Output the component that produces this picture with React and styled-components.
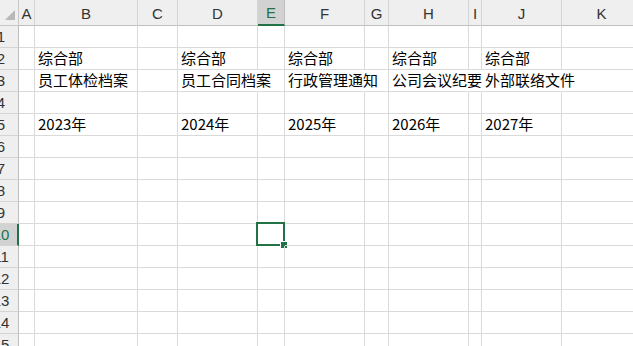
import React from "react";
import styled, { createGlobalStyle, css } from "styled-components";

const GlobalStyle = createGlobalStyle`
  html, body {
    margin: 0;
    padding: 0;
    background: #ffffff;
    overflow: hidden;
  }
`;

const columns = [
  { key: "A", width: 16 },
  { key: "B", width: 103 },
  { key: "C", width: 40 },
  { key: "D", width: 80 },
  { key: "E", width: 27 },
  { key: "F", width: 80 },
  { key: "G", width: 24 },
  { key: "H", width: 80 },
  { key: "I", width: 13 },
  { key: "J", width: 80 },
  { key: "K", width: 80 },
];

const ROW_COUNT = 15;
const ACTIVE_COL = "E";
const ACTIVE_ROW = 10;

// values keyed by row, then column
const data = {
  2: { B: "综合部", D: "综合部", F: "综合部", H: "综合部", J: "综合部" },
  3: {
    B: "员工体检档案",
    D: "员工合同档案",
    F: "行政管理通知",
    H: "公司会议纪要",
    J: "外部联络文件",
  },
  5: { B: "2023年", D: "2024年", F: "2025年", H: "2026年", J: "2027年" },
};

// cells whose right grid line is covered by overflowing text
const openCells = {
  3: ["D", "F", "H", "I", "J"],
};

export default function App() {
  const rows = Array.from({ length: ROW_COUNT }, (_, i) => i + 1);

  return (
    <>
      <GlobalStyle />
      <Sheet $template={columns.map((c) => `${c.width}px`).join(" ")}>
        <Corner>
          <svg width="12" height="12" viewBox="0 0 12 12">
            <polygon points="11,1 11,11 1,11" fill="#b9b9b9" />
          </svg>
        </Corner>
        {columns.map((c) => (
          <ColHead key={c.key} $active={c.key === ACTIVE_COL}>
            {c.key}
          </ColHead>
        ))}

        {rows.map((r) => (
          <React.Fragment key={r}>
            <RowHead $active={r === ACTIVE_ROW}>
              <RowNum>{r}</RowNum>
            </RowHead>
            {columns.map((c) => (
              <Cell
                key={c.key}
                $open={(openCells[r] || []).includes(c.key)}
              >
                {data[r] && data[r][c.key]}
                {r === ACTIVE_ROW && c.key === ACTIVE_COL && (
                  <Selection>
                    <FillHandle />
                  </Selection>
                )}
              </Cell>
            ))}
          </React.Fragment>
        ))}
      </Sheet>
    </>
  );
}

const green = "#217346";

const Sheet = styled.div`
  display: grid;
  grid-template-columns: 19px ${(p) => p.$template};
  grid-template-rows: 26px repeat(${ROW_COUNT}, 22px);
  width: max-content;
`;

const headBase = css`
  box-sizing: border-box;
  background: #efefef;
  font-family: "Liberation Sans", "Noto Sans", sans-serif;
  font-size: 15px;
  color: #333333;
  display: flex;
  align-items: center;
  justify-content: center;
`;

const Corner = styled.div`
  ${headBase};
  align-items: flex-end;
  justify-content: flex-end;
  padding: 0 2px 4px 0;
  border-right: 1px solid #c8c8c8;
  border-bottom: 1px solid #c8c8c8;
`;

const ColHead = styled.div`
  ${headBase};
  padding-top: 1px;
  border-right: 1px solid #d4d4d4;
  border-bottom: 1px solid #bfbfbf;

  ${(p) =>
    p.$active &&
    css`
      background: #d2d2d2;
      color: ${green};
      border-bottom: 2px solid ${green};
      border-right-color: #bfbfbf;
    `}
`;

const RowHead = styled.div`
  ${headBase};
  justify-content: flex-start;
  overflow: hidden;
  border-right: 1px solid #bfbfbf;
  border-bottom: 1px solid #d4d4d4;

  ${(p) =>
    p.$active &&
    css`
      background: #d2d2d2;
      color: ${green};
      border-right: 2px solid ${green};
    `}
`;

const RowNum = styled.span`
  flex: none;
  width: 32px;
  margin-left: -15px;
  text-align: center;
`;

const Cell = styled.div`
  position: relative;
  box-sizing: border-box;
  display: flex;
  align-items: flex-end;
  padding: 0 0 1px 3px;
  white-space: nowrap;
  font-family: "Noto Sans CJK SC", "Noto Sans", sans-serif;
  font-size: 15px;
  line-height: 20px;
  color: #000000;
  border-right: 1px solid ${(p) => (p.$open ? "transparent" : "#dadada")};
  border-bottom: 1px solid #dadada;
`;

const Selection = styled.div`
  position: absolute;
  top: -2px;
  left: -2px;
  right: -1px;
  bottom: -1px;
  border: 2px solid ${green};
  pointer-events: none;
`;

const FillHandle = styled.div`
  position: absolute;
  right: -5px;
  bottom: -5px;
  width: 6px;
  height: 6px;
  background: ${green};
  border: 1px solid #ffffff;
`;
